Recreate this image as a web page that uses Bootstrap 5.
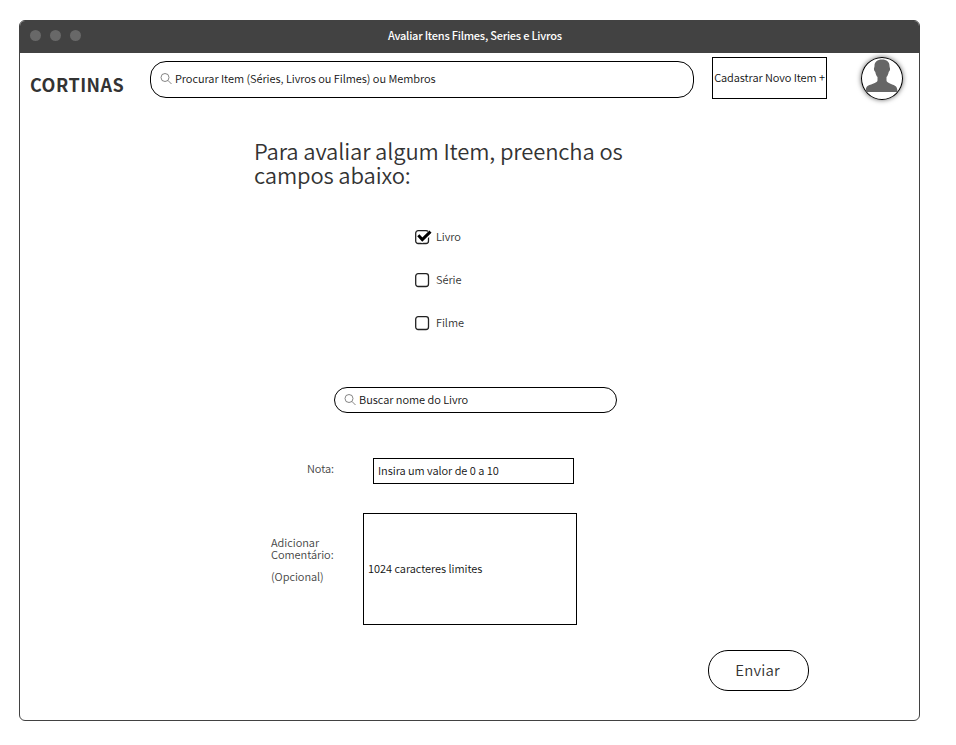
<!DOCTYPE html>
<html lang="pt-BR">
<head>
<meta charset="utf-8">
<meta name="viewport" content="width=device-width, initial-scale=1">
<title>Avaliar Itens Filmes, Series e Livros</title>
<link href="https://cdn.jsdelivr.net/npm/bootstrap@5.3.0/dist/css/bootstrap.min.css" rel="stylesheet">
<style>
body{font-family:"Noto Sans CJK SC","Noto Sans",sans-serif;font-size:11px;font-weight:350;line-height:12px;letter-spacing:-.045px;color:#111;background:#fff}
.app-window{width:901px;height:701px;margin:20px 0 0 19px;border:1px solid #424242;border-radius:6px;overflow:hidden}
.title-bar{height:32px;background:#424242;color:#fff;padding:0 0 4px 10px}
.dots{gap:9px}
.dots span{width:11px;height:11px;border-radius:50%;background:#686868}
.title-text{font-weight:500;margin-left:307px;letter-spacing:-.23px}
.brand{width:130px;padding-left:10px;margin-top:19px;font-size:18px;line-height:24px;font-weight:700;color:#333;letter-spacing:.5px}
.pill{border:1px solid #000;background:#fff;color:#111;white-space:nowrap}
.search-main{width:544px;height:37px;margin-top:8px;border-radius:16px;padding:0 0 3px 9px}
.pill svg{width:12px;height:12px;margin-right:3px}
.new-item{width:115px;height:42px;margin:4px 0 0 18px;border:1px solid #000;background:#fff;color:#111;padding:0 0 2px;white-space:nowrap;font-weight:350;letter-spacing:-.08px}
.avatar{width:42px;height:43px;margin:4px 0 0 34px;border:1.5px solid #000;border-radius:50%;overflow:hidden;box-shadow:0 0 5px rgba(0,0,0,.6)}
.headline{width:400px;margin:38px 0 0 234px;font-size:22px;line-height:24px;font-weight:350;color:#333;letter-spacing:-.13px}
.options{margin:44px 0 0 395px;gap:29px}
.option{height:14px;gap:6px;color:#333}
.option svg{width:17px;height:16px;margin-right:-2px;flex:none}
.option span{margin-top:-3px}
.search-book{width:283px;height:26px;margin:57px 0 0 314px;border-radius:13px;padding:0 0 2px 9px}
.field-label{color:#444}
.label-score{width:66px;margin-top:4px}
.label-comment{width:92px;margin-top:23px}
.optional-note{margin-top:10px}
.row-score{margin:45px 0 0 287px}
.row-comment{margin:29px 0 0 251px}
.box{border:1px solid #000;padding:0 0 2px 4px}
.box-score{width:201px;height:26px}
.box-comment{width:214px;height:112px}
.send{width:101px;height:41px;margin:25px 0 0 688px;border-radius:20px;font-size:15px;color:#333;font-weight:350;letter-spacing:.15px}
.send span{margin:-2px 2px 0 0}
</style>
</head>
<body>
<div class="app-window d-flex flex-column">
  <div class="title-bar d-flex align-items-center flex-shrink-0">
    <div class="dots d-flex"><span></span><span></span><span></span></div>
    <div class="title-text">Avaliar Itens Filmes, Series e Livros</div>
  </div>
  <header class="d-flex align-items-start">
    <div class="brand">CORTINAS</div>
    <div class="pill search-main d-flex align-items-center">
      <svg viewBox="0 0 12 12" fill="none" stroke="#777" stroke-width=".9"><circle cx="5" cy="5.500" r="4"/><path d="M8 8.500l3.500 3.500"/></svg>
      <span>Procurar Item (Séries, Livros ou Filmes) ou Membros</span>
    </div>
    <button type="button" class="new-item">Cadastrar Novo Item +</button>
    <div class="avatar">
      <svg class="d-block" width="40" height="40" viewBox="0 0 40 40" fill="#666"><path d="M20 1.500c-4.700 0-7.600 2.500-7.500 6.500 0 1.500-.8 2-.5 3.500.2 1.400.9 1.800 1.300 2.500.5 2.500 1.200 4 2.200 5v3.500c0 2.500-8.500 4-10.500 6-1 1-1.400 3-1.500 5.500h32c-.1-2.500-.5-4.500-1.500-5.500-2-2-9.500-3.500-9.500-6v-3.500c1-1 1.700-2.500 2.200-5 .4-.7 1.100-1.100 1.300-2.500.3-1.500-.5-2-.5-3.500.1-4-2.800-6.500-7.500-6.500z"/></svg>
    </div>
  </header>
  <main>
    <h1 class="headline mb-0">Para avaliar algum Item, preencha os<br>campos abaixo:</h1>
    <div class="options d-flex flex-column">
      <div class="option d-flex align-items-center"><svg viewBox="0 0 17 16" fill="none"><rect x=".7" y="1.700" width="12.800" height="12.800" rx="2.500" stroke="#222" stroke-width="1.300"/><path d="M3.500 7l3.700 3.800L16 3" stroke="#fff" stroke-width="5"/><path d="M3.300 6.300l4 4.200L15.500 2.600" stroke="#000" stroke-width="3"/></svg><span>Livro</span></div>
      <div class="option d-flex align-items-center"><svg viewBox="0 0 17 16" fill="none"><rect x=".7" y="1.700" width="12.800" height="12.800" rx="2.500" stroke="#222" stroke-width="1.300"/></svg><span>Série</span></div>
      <div class="option d-flex align-items-center"><svg viewBox="0 0 17 16" fill="none"><rect x=".7" y="1.700" width="12.800" height="12.800" rx="2.500" stroke="#222" stroke-width="1.300"/></svg><span>Filme</span></div>
    </div>
    <div class="pill search-book d-flex align-items-center">
      <svg viewBox="0 0 12 12" fill="none" stroke="#777" stroke-width=".9"><circle cx="5" cy="5.500" r="4"/><path d="M8 8.500l3.500 3.500"/></svg>
      <span>Buscar nome do Livro</span>
    </div>
    <div class="row-score d-flex">
      <div class="field-label label-score">Nota:</div>
      <div class="box box-score d-flex align-items-center">Insira um valor de 0 a 10</div>
    </div>
    <div class="row-comment d-flex">
      <div class="field-label label-comment">Adicionar<br>Comentário:<div class="optional-note">(Opcional)</div></div>
      <div class="box box-comment d-flex align-items-center">1024 caracteres limites</div>
    </div>
    <button type="button" class="pill send d-flex align-items-center justify-content-center p-0"><span>Enviar</span></button>
  </main>
</div>
<script src="https://cdn.jsdelivr.net/npm/bootstrap@5.3.0/dist/js/bootstrap.bundle.min.js"></script>
</body>
</html>
